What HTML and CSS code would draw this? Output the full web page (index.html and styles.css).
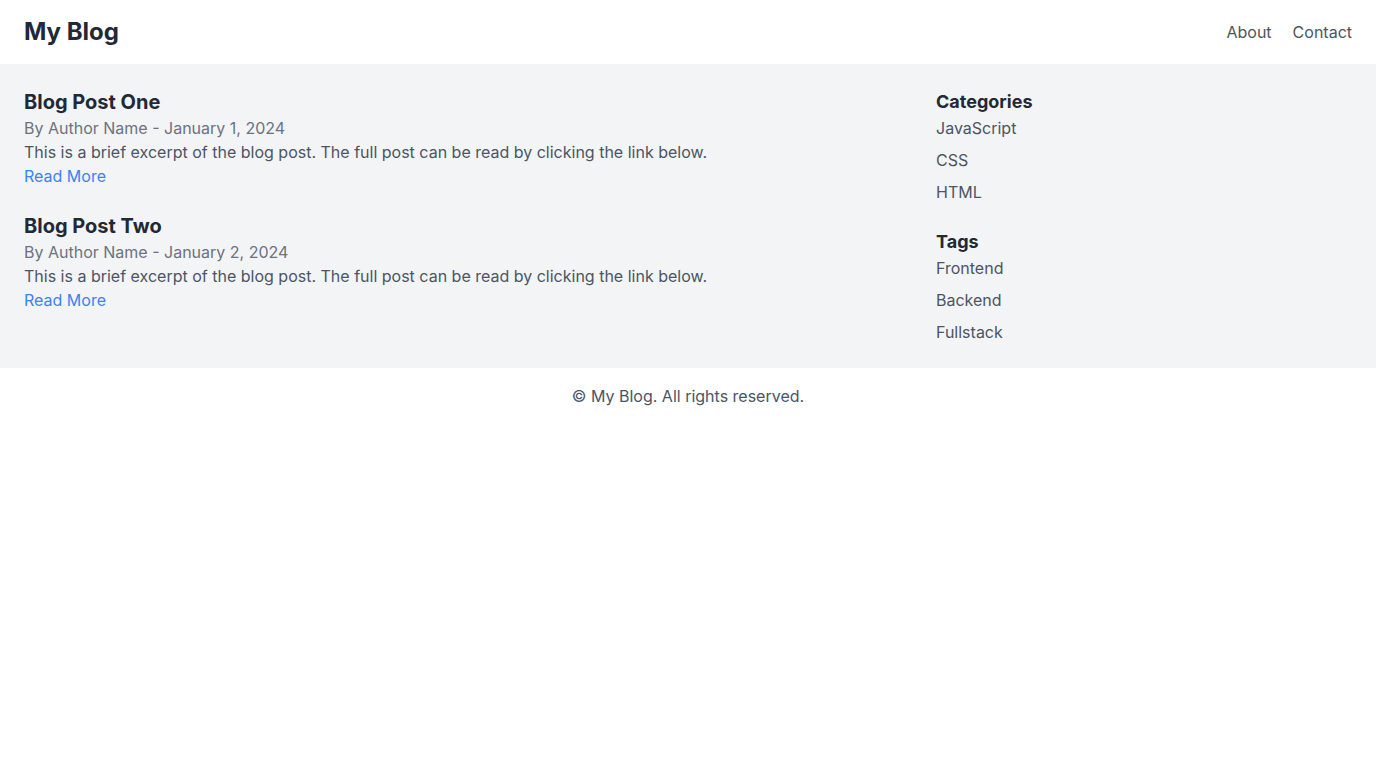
FILE: index.html
```html
<!DOCTYPE html>
<html lang="en">
<head>
<meta charset="utf-8">
<title>My Blog</title>
<link rel="stylesheet" href="styles.css">
</head>
<body>
<header class="site-header">
  <h1 class="logo">My Blog</h1>
  <nav class="nav">
    <a href="#">About</a>
    <a href="#">Contact</a>
  </nav>
</header>
<div class="content">
  <main class="posts">
    <article class="post">
      <h2 class="post-title">Blog Post One</h2>
      <p class="meta">By Author Name - January 1, 2024</p>
      <p class="excerpt">This is a brief excerpt of the blog post. The full post can be read by clicking the link below.</p>
      <a class="more" href="#">Read More</a>
    </article>
    <article class="post">
      <h2 class="post-title">Blog Post Two</h2>
      <p class="meta">By Author Name - January 2, 2024</p>
      <p class="excerpt">This is a brief excerpt of the blog post. The full post can be read by clicking the link below.</p>
      <a class="more" href="#">Read More</a>
    </article>
  </main>
  <aside class="sidebar">
    <section class="widget">
      <h3 class="widget-title">Categories</h3>
      <ul class="list">
        <li><a href="#">JavaScript</a></li>
        <li><a href="#">CSS</a></li>
        <li><a href="#">HTML</a></li>
      </ul>
    </section>
    <section class="widget">
      <h3 class="widget-title">Tags</h3>
      <ul class="list">
        <li><a href="#">Frontend</a></li>
        <li><a href="#">Backend</a></li>
        <li><a href="#">Fullstack</a></li>
      </ul>
    </section>
  </aside>
</div>
<footer class="site-footer">© My Blog. All rights reserved.</footer>
</body>
</html>
```
FILE: styles.css
```css
* { box-sizing: border-box; }
html, body { margin: 0; padding: 0; }
body {
  font-family: Inter, "Noto Sans", sans-serif;
  font-size: 16px;
  line-height: 24px;
  color: #4b5563;
  background: #ffffff;
}
a { text-decoration: none; color: inherit; }
p, h1, h2, h3, ul { margin: 0; padding: 0; }
ul { list-style: none; }

.site-header {
  height: 64px;
  padding: 0 24px;
  display: flex;
  align-items: center;
  justify-content: space-between;
  background: #fff;
}
.logo {
  font-size: 24px;
  line-height: 32px;
  font-weight: 700;
  color: #1f2937;
}
.nav { display: flex; gap: 21px; }
.nav a { color: #4b5563; }

.content {
  background: #f3f4f6;
  padding: 24px;
  display: grid;
  grid-template-columns: 1fr 416px;
}
.posts { display: flex; flex-direction: column; gap: 24px; }
.post-title {
  font-size: 20px;
  line-height: 28px;
  font-weight: 700;
  color: #1f2937;
}
.meta { color: #6b7280; }
.excerpt { color: #4b5563; }
.more { color: #3b82f6; }

.sidebar { display: flex; flex-direction: column; gap: 24px; }
.widget-title {
  font-size: 18px;
  line-height: 28px;
  font-weight: 700;
  color: #1f2937;
}
.list { display: flex; flex-direction: column; gap: 8px; }
.list a { color: #4b5563; }

.site-footer {
  padding: 16px;
  text-align: center;
  color: #4b5563;
}
```
